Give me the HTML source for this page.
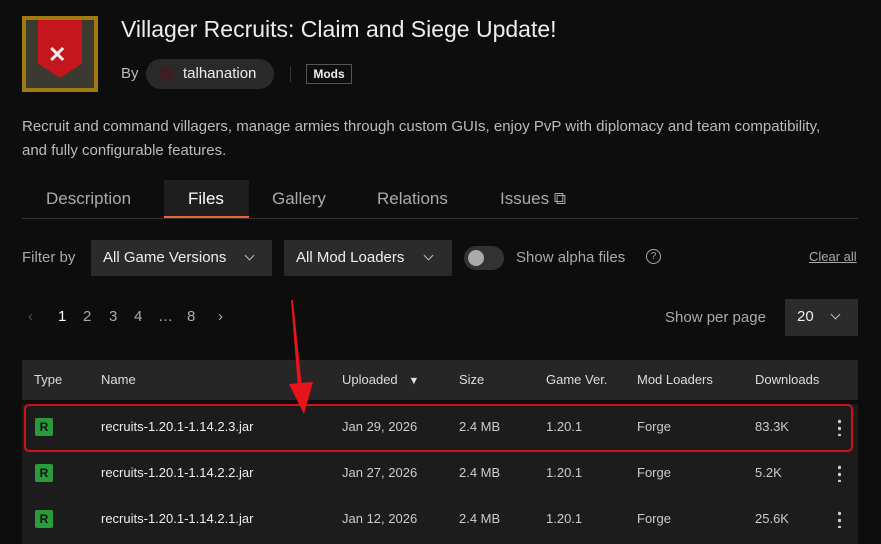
<!DOCTYPE html><html><head><meta charset="utf-8"><style>
*{margin:0;padding:0;box-sizing:border-box}
body{width:881px;height:544px;background:#0d0d0d;font-family:"Liberation Sans",sans-serif;color:#ddd;position:relative;overflow:hidden}
.a{position:absolute;white-space:nowrap}
.dd{position:absolute;background:#2b2b2b;height:36px;top:240px;font-size:15px;color:#eee;line-height:36px;padding-left:12px}
.chev{position:absolute;width:7px;height:7px;border-right:1.5px solid #bbb;border-bottom:1.5px solid #bbb;transform:rotate(45deg)}
.row{position:absolute;left:22px;width:836px;height:46px;background:#1c1c1c;font-size:13px;color:#ccc}
.row span{position:absolute;top:15px}
.R{position:absolute;left:13px;top:14px;width:18px;height:18px;background:#2a9a3c;color:#111;font-size:12px;font-weight:bold;text-align:center;line-height:18px;border-radius:2px}
.dots{position:absolute;left:816px;top:14px;width:3px;height:18px;background:radial-gradient(circle,#ccc 1.5px,transparent 2px) 0 0/3px 7px}
.pg{position:absolute;top:308px;font-size:15px;color:#aaa}
</style></head><body>
<div class="a" style="left:22px;top:16px;width:76px;height:76px;background:#a07a10;padding:4px"><div style="width:100%;height:100%;background:#3a3a30;position:relative"><div style="position:absolute;left:12px;top:0;width:44px;height:58px;background:#c4161c;clip-path:polygon(0 0,100% 0,100% 75%,50% 100%,0 75%)"></div><div style="position:absolute;left:22px;top:22px;font-size:22px;color:#eee;font-weight:bold">✕</div></div></div>
<div class="a" style="left:121px;top:16px;font-size:23px;color:#eee">Villager Recruits: Claim and Siege Update!</div>
<div class="a" style="left:121px;top:65px;font-size:15px;color:#bbb">By</div>
<div class="a" style="left:146px;top:59px;width:128px;height:30px;border-radius:15px;background:#2a2a2a"></div>
<div class="a" style="left:158px;top:66px;width:16px;height:16px;border-radius:50%;background:#3a2020"></div>
<div class="a" style="left:183px;top:65px;font-size:15px;color:#eee">talhanation</div>
<div class="a" style="left:290px;top:66px;width:1px;height:16px;background:#333"></div>
<div class="a" style="left:306px;top:64px;width:46px;height:20px;border:1px solid #555;font-size:12px;font-weight:bold;color:#eee;text-align:center;line-height:18px">Mods</div>
<div class="a" style="left:22px;top:115px;font-size:15px;line-height:24px;color:#bbb">Recruit and command villagers, manage armies through custom GUIs, enjoy PvP with diplomacy and team compatibility,<br>and fully configurable features.</div>
<div class="a" style="left:164px;top:180px;width:85px;height:38px;background:#1e1e1e;border-bottom:2px solid #e9643a"></div>
<div class="a" style="left:22px;top:218px;width:836px;height:1px;background:#333"></div>
<div class="a" style="left:46px;top:189px;font-size:17px;color:#aaa">Description</div>
<div class="a" style="left:188px;top:189px;font-size:17px;color:#fff">Files</div>
<div class="a" style="left:272px;top:189px;font-size:17px;color:#aaa">Gallery</div>
<div class="a" style="left:377px;top:189px;font-size:17px;color:#aaa">Relations</div>
<div class="a" style="left:500px;top:189px;font-size:17px;color:#aaa">Issues ⧉</div>
<div class="a" style="left:22px;top:249px;font-size:15px;color:#aaa">Filter by</div>
<div class="dd" style="left:91px;width:181px">All Game Versions<i class="chev" style="left:155px;top:12px"></i></div>
<div class="dd" style="left:284px;width:168px">All Mod Loaders<i class="chev" style="left:141px;top:12px"></i></div>
<div class="a" style="left:464px;top:246px;width:40px;height:24px;border-radius:12px;background:#333"></div>
<div class="a" style="left:468px;top:250px;width:16px;height:16px;border-radius:50%;background:#aaa"></div>
<div class="a" style="left:516px;top:249px;font-size:15px;color:#aaa">Show alpha files</div>
<div class="a" style="left:646px;top:249px;width:15px;height:15px;border:1px solid #aaa;border-radius:50%;font-size:10px;text-align:center;line-height:13px;color:#aaa">?</div>
<div class="a" style="left:809px;top:249px;font-size:13px;color:#aaa;text-decoration:underline">Clear all</div>
<div class="pg" style="left:28px;color:#555">‹</div>
<div class="pg" style="left:58px;color:#fff">1</div>
<div class="pg" style="left:83px">2</div>
<div class="pg" style="left:109px">3</div>
<div class="pg" style="left:134px">4</div>
<div class="pg" style="left:158px">…</div>
<div class="pg" style="left:187px">8</div>
<div class="pg" style="left:218px">›</div>
<div class="a" style="left:665px;top:309px;font-size:15px;color:#aaa">Show per page</div>
<div class="dd" style="left:785px;width:73px;top:299px;height:37px">20<i class="chev" style="left:47px;top:12px"></i></div>
<div class="a" style="left:22px;top:360px;width:836px;height:40px;background:#262626;font-size:13px;color:#ddd">
<span class="a" style="left:12px;top:12px">Type</span><span class="a" style="left:79px;top:12px">Name</span><span class="a" style="left:320px;top:12px">Uploaded &nbsp; <small>▼</small></span><span class="a" style="left:437px;top:12px">Size</span><span class="a" style="left:524px;top:12px">Game Ver.</span><span class="a" style="left:615px;top:12px">Mod Loaders</span><span class="a" style="left:733px;top:12px">Downloads</span></div>
<div class="row" style="top:404px"><div class="R">R</div><span style="left:79px;color:#eee">recruits-1.20.1-1.14.2.3.jar</span><span style="left:320px">Jan 29, 2026</span><span style="left:437px">2.4 MB</span><span style="left:524px">1.20.1</span><span style="left:615px">Forge</span><span style="left:733px">83.3K</span><div class="dots"></div></div>
<div class="row" style="top:450px"><div class="R">R</div><span style="left:79px;color:#eee">recruits-1.20.1-1.14.2.2.jar</span><span style="left:320px">Jan 27, 2026</span><span style="left:437px">2.4 MB</span><span style="left:524px">1.20.1</span><span style="left:615px">Forge</span><span style="left:733px">5.2K</span><div class="dots"></div></div>
<div class="row" style="top:496px;height:48px"><div class="R">R</div><span style="left:79px;color:#eee">recruits-1.20.1-1.14.2.1.jar</span><span style="left:320px">Jan 12, 2026</span><span style="left:437px">2.4 MB</span><span style="left:524px">1.20.1</span><span style="left:615px">Forge</span><span style="left:733px">25.6K</span><div class="dots"></div></div>
<div class="a" style="left:24px;top:404px;width:829px;height:48px;border:2px solid #d0101a;border-radius:5px"></div>
<svg class="a" style="left:0;top:0" width="881" height="544"><polygon points="291,300 293,300 302,388 298,388" fill="#e8141c"/><polygon points="289,384 313,382 304,414" fill="#e8141c"/></svg>
</body></html>
